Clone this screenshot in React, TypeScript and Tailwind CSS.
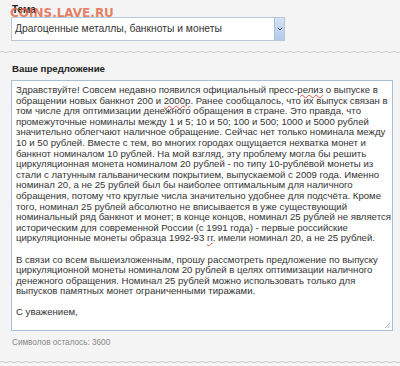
import { ChevronDown } from 'lucide-react';

const LINES: string[] = [
  'Здравствуйте! Совсем недавно появился официальный пресс-|релиз| о выпуске в',
  'обращении новых банкнот 200 и |2000р|. Ранее сообщалось, что их выпуск связан в',
  'том числе для оптимизации денежного обращения в стране. Это правда, что',
  'промежуточные номиналы между 1 и 5; 10 и 50; 100 и 500; 1000 и 5000 рублей',
  'значительно облегчают наличное обращение. Сейчас нет только номинала между',
  '10 и 50 рублей. Вместе с тем, во многих городах ощущается нехватка монет и',
  'банкнот номиналом 10 рублей. На мой взгляд, эту проблему могла бы решить',
  'циркуляционная монета номиналом 20 рублей - по типу 10-рублёвой монеты из',
  'стали с латунным гальваническим покрытием, выпускаемой с 2009 года. Именно',
  'номинал 20, а не 25 рублей был бы наиболее оптимальным для наличного',
  'обращения, потому что круглые числа значительно удобнее для подсчёта. Кроме',
  'того, номинал 25 рублей абсолютно не вписывается в уже существующий',
  'номинальный ряд банкнот и монет; в конце концов, номинал 25 рублей не является',
  'историческим для современной России (с 1991 года) - первые российские',
  'циркуляционные монеты образца 1992-93 |гг|. имели номинал 20, а не 25 рублей.',
  '',
  'В связи со всем вышеизложенным, прошу рассмотреть предложение по выпуску',
  'циркуляционной монеты номиналом 20 рублей в целях оптимизации наличного',
  'денежного обращения. Номинал 25 рублей можно использовать только для',
  'выпусков памятных монет ограниченными тиражами.',
  '',
  'С уважением,',
];

// words between | | get the spellcheck squiggle
function Line({ text }: { text: string }) {
  if (!text) return <div className="h-[10.6px]" />;
  const parts = text.split('|');
  return (
    <div className="h-[10.6px] whitespace-pre">
      {parts.map((p, i) =>
        i % 2 === 1 ? (
          <span key={i} className="underline decoration-wavy decoration-[#e05050] decoration-[0.5px] underline-offset-1">{p}</span>
        ) : (
          <span key={i}>{p}</span>
        )
      )}
    </div>
  );
}

function Wave() {
  return (
    <svg width="400" height="4" className="block">
      <defs>
        <pattern id="wv" width="8" height="4" patternUnits="userSpaceOnUse">
          <path d="M0 2 Q2 0.5 4 2 T8 2" fill="none" stroke="#c9c9c9" strokeWidth="1" />
        </pattern>
      </defs>
      <rect width="400" height="4" fill="url(#wv)" />
    </svg>
  );
}

export default function App() {
  return (
    <div className="w-[400px] h-[366px] overflow-hidden bg-[#f4f4f4] font-['Liberation_Sans',Arial,sans-serif] text-[#333]">
      <div className="relative px-[11px] pt-[4px]">
        <div className="text-[10px] font-bold text-[#222] leading-[12px] pl-[1px]">Тема</div>
        <div className="absolute left-[10px] top-[6px] font-['DejaVu_Sans',sans-serif] font-bold text-[12px] leading-[14px] text-[#e0603f]/80">
          COINS.LAVE.RU
        </div>
        <div className="mt-[1px] flex w-[274px] h-[24px] bg-white border border-[#b8c6d8]">
          <div className="flex-1 flex items-center pl-[3px] text-[10.3px] text-[#333]">
            Драгоценные металлы, банкноты и монеты
          </div>
          <div className="w-[10px] flex items-center justify-center bg-gradient-to-b from-[#d6e3f7] to-[#b3c9ea] border-l border-[#a9bcd9]">
            <ChevronDown className="w-[8px] h-[8px] text-[#3b4f78]" strokeWidth={3} />
          </div>
        </div>
      </div>
      <div className="mt-[9px]">
        <Wave />
      </div>
      <div className="px-[11px] pt-[9px]">
        <div className="text-[9.7px] font-bold text-[#222] leading-[12px] pl-[1px]">Ваше предложение</div>
        <div className="relative mt-[5px] w-[382px] h-[251px] bg-white border border-[#a9bfd8] pl-[4px] pt-[4px] text-[9.6px] leading-[10.6px] text-[#333]">
          {LINES.map((l, i) => (
            <Line key={i} text={l} />
          ))}
          <svg width="7" height="7" className="absolute right-[1px] bottom-[1px]">
            <path d="M6 1 L1 6 M6 3.5 L3.5 6" stroke="#999" strokeWidth="0.8" />
          </svg>
        </div>
        <div className="mt-[7px] text-[8.2px] text-[#888] leading-[10px] pl-[1px]">Символов осталось: 3600</div>
      </div>
      <div className="mt-[12px]">
        <Wave />
      </div>
    </div>
  );
}
